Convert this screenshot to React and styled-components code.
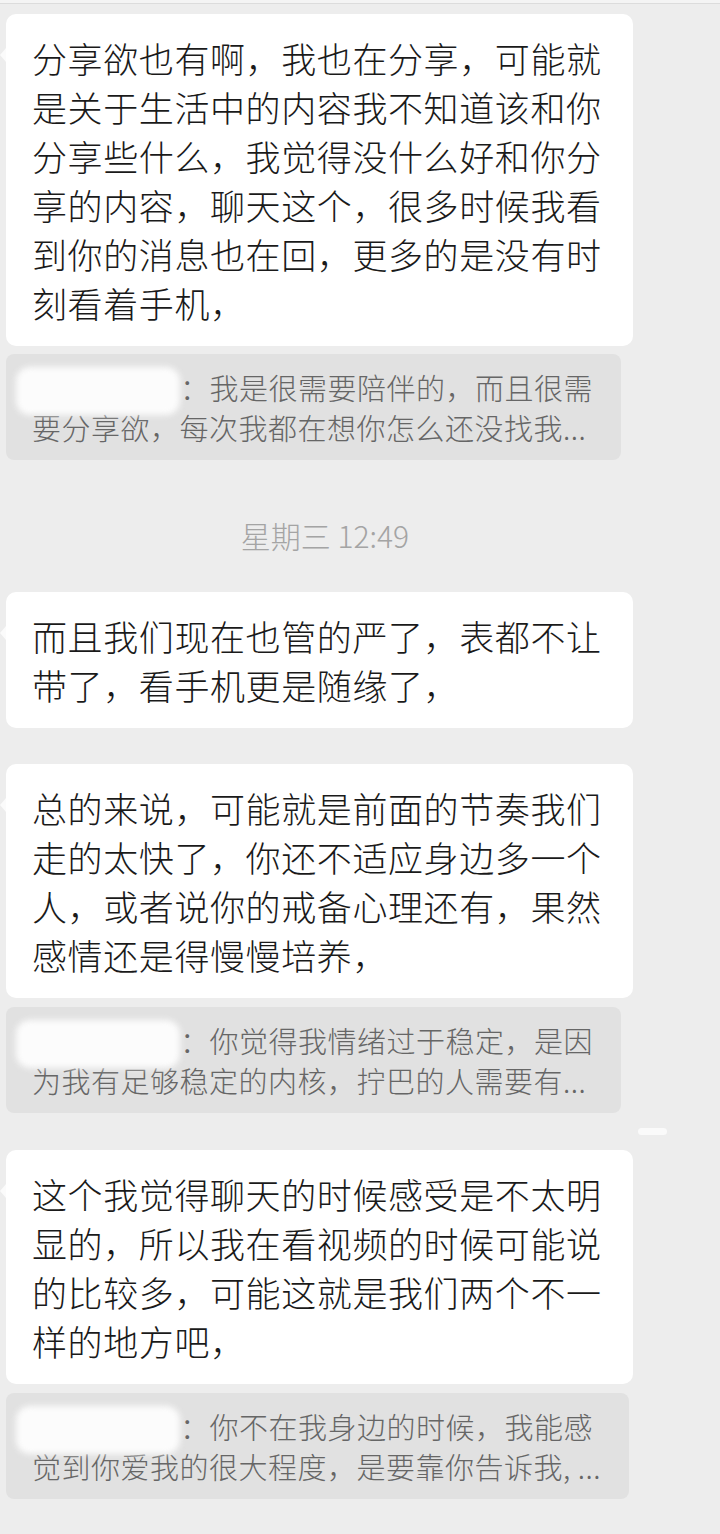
import React from 'react';
import styled, { createGlobalStyle } from 'styled-components';

const GlobalStyle = createGlobalStyle`
  html, body {
    margin: 0;
    padding: 0;
    background: #ededed;
  }
  body {
    font-family: "Noto Sans CJK SC", "Noto Sans", sans-serif;
  }
`;

const Screen = styled.div`
  width: 720px;
  min-height: 1534px;
  background: #ededed;
  overflow: hidden;
`;

const TopStrip = styled.div`
  height: 3px;
  background: #f4f4f4;
  border-bottom: 1px solid #dcdcdc;
`;

const Feed = styled.div`
  display: flex;
  flex-direction: column;
  align-items: flex-start;
  padding: 10px 0 0 6px;
`;

const Bubble = styled.div`
  position: relative;
  box-sizing: border-box;
  width: 627px;
  margin-top: ${(p) => p.$gap || 0}px;
  padding: 19px 28px 19px 26px;
  background: #ffffff;
  border-radius: 10px;
  color: #1a1a1a;
  font-size: 35px;
  font-weight: 300;
  letter-spacing: 0.6px;
  line-height: 49px;

  &::before {
    content: '';
    position: absolute;
    left: -6px;
    top: 34px;
    border-top: 7px solid transparent;
    border-bottom: 7px solid transparent;
    border-right: 6px solid rgba(255, 255, 255, 0.75);
  }
`;

const Quote = styled.div`
  box-sizing: border-box;
  max-width: 630px;
  margin-top: ${(p) => p.$gap || 8}px;
  padding: 13px 28px 13px 26px;
  background: #e1e1e1;
  border-radius: 8px;
  color: #666666;
  font-size: 29px;
  font-weight: 300;
  letter-spacing: 0.5px;
  line-height: 40px;
`;

const QuoteLine = styled.div`
  white-space: nowrap;
`;

const HiddenName = styled.span`
  position: relative;
  display: inline-block;
  width: 148px;
  height: 30px;
  vertical-align: middle;

  &::after {
    content: '';
    position: absolute;
    left: -16px;
    top: -10px;
    width: 164px;
    height: 48px;
    background: #fcfcfc;
    border-radius: 14px;
    filter: blur(3px);
  }
`;

const TimeRow = styled.div`
  width: 638px;
  margin: 57px 0 39px;
  text-align: center;
  color: #a4a4a4;
  font-size: 30px;
  font-weight: 300;
  line-height: 36px;
`;

const Pill = styled.div`
  width: 29px;
  height: 7px;
  margin: 15px 0 15px 632px;
  border-radius: 4px;
  background: #fafafa;
`;

const Message = ({ text, quote, gap, quoteGap }) => (
  <>
    <Bubble $gap={gap}>{text}</Bubble>
    {quote && (
      <Quote $gap={quoteGap}>
        <QuoteLine>
          <HiddenName />
          {quote[0]}
        </QuoteLine>
        <QuoteLine>{quote[1]}</QuoteLine>
      </Quote>
    )}
  </>
);

export default function App() {
  return (
    <Screen>
      <GlobalStyle />
      <TopStrip />
      <Feed>
        <Message
          text="分享欲也有啊，我也在分享，可能就是关于生活中的内容我不知道该和你分享些什么，我觉得没什么好和你分享的内容，聊天这个，很多时候我看到你的消息也在回，更多的是没有时刻看着手机，"
          quote={['：我是很需要陪伴的，而且很需', '要分享欲，每次我都在想你怎么还没找我...']}
        />
        <TimeRow>星期三 12:49</TimeRow>
        <Message text="而且我们现在也管的严了，表都不让带了，看手机更是随缘了，" />
        <Message
          gap={36}
          quoteGap={9}
          text="总的来说，可能就是前面的节奏我们走的太快了，你还不适应身边多一个人，或者说你的戒备心理还有，果然感情还是得慢慢培养，"
          quote={['：你觉得我情绪过于稳定，是因', '为我有足够稳定的内核，拧巴的人需要有...']}
        />
        <Pill />
        <Message
          quoteGap={9}
          text="这个我觉得聊天的时候感受是不太明显的，所以我在看视频的时候可能说的比较多，可能这就是我们两个不一样的地方吧，"
          quote={['：你不在我身边的时候，我能感', '觉到你爱我的很大程度，是要靠你告诉我, ...']}
        />
      </Feed>
    </Screen>
  );
}
